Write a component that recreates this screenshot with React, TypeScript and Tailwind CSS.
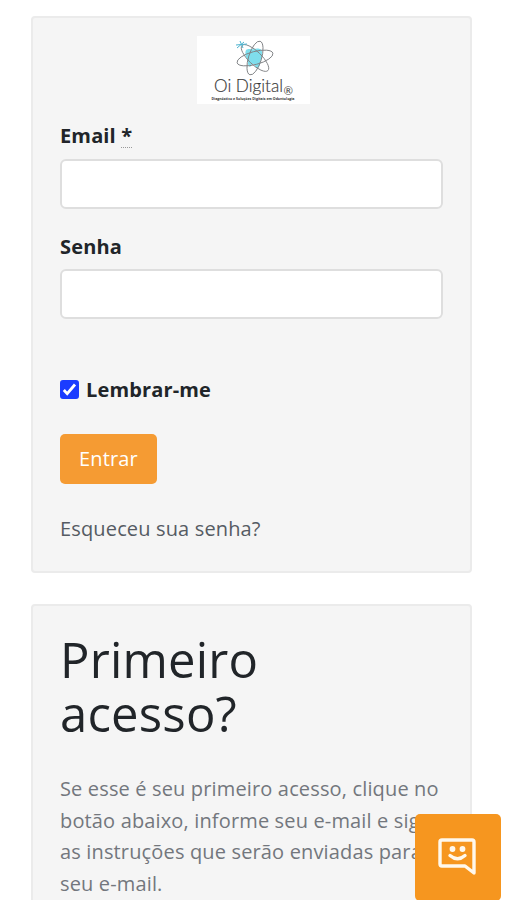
import { useState } from "react";

function Logo() {
    return (
        <svg viewBox="0 0 113 68" className="relative left-[2px] mx-auto block h-[68px] w-[113px] bg-white" role="img" aria-label="Oi Digital">
            <path d="M49 14c3-2 5 0 8-1 3-1 8-1 8 3 1 5-2 8-2 12-1 4-3 6-5 2-1-3-3-3-4 0-1 2-3 0-3-3-1-5-4-8-2-13z" fill="#7fdeec" />
            <g fill="none" stroke="#808285" strokeWidth="0.9">
                <ellipse cx="58" cy="22" rx="18.500" ry="6.500" transform="rotate(-15 58 22)" />
                <ellipse cx="58" cy="22" rx="18" ry="6.500" transform="rotate(44 58 22)" />
                <ellipse cx="58" cy="22" rx="17.500" ry="6.500" transform="rotate(-73 58 22)" />
            </g>
            <path d="M39 9l11-1M43 5l3 7M40 12l7-6" stroke="#4cb3cf" strokeWidth="1" />
            <text x="17" y="55.500" fontSize="18" fontFamily="Lato" fontWeight="300" fill="#333" stroke="#555" strokeWidth="0.2" letterSpacing="0" textLength="69" lengthAdjust="spacingAndGlyphs">Oi Digital</text>
            <text x="86.500" y="58.500" fontSize="12" fontFamily="Lato" letterSpacing="0" fill="#444" textLength="9.500" lengthAdjust="spacingAndGlyphs">®</text>
            <text x="14.500" y="64" fontSize="3.600" fontFamily="Open Sans" fontWeight="700" letterSpacing="0" fill="#333" textLength="83" lengthAdjust="spacingAndGlyphs">Diagnóstico e Soluções Digitais em Odontologia</text>
        </svg>
    )
}

function ChatButton() {
    return (
        <button className="fixed left-[415px] top-[814px] h-[87px] w-[86px] rounded-[5px] bg-[#f6961f]" aria-label="Chat">
            <svg viewBox="0 0 86 87" className="block h-[87px] w-[86px]" fill="none" stroke="#fff8ec" strokeWidth="3.4" strokeLinejoin="round">
                <path d="M27 26h30a2 2 0 0 1 2 2v31l-9-7H27a2 2 0 0 1-2-2V28a2 2 0 0 1 2-2z" />
                <path d="M35 41.500q7.500 6.500 15 0" strokeLinecap="round" />
                <circle cx="37.500" cy="35" r="2.900" fill="#fff8ec" stroke="none" />
                <circle cx="47.500" cy="35" r="2.900" fill="#fff8ec" stroke="none" />
            </svg>
        </button>
    )
}

const inputClass = "block h-[50px] w-full rounded-[6px] border-2 border-[#dedede] bg-white px-4 outline-none";
const cardClass = "rounded-[4px] border-2 border-[#ebebeb] bg-[#f5f5f5] px-[27px]";

export default function App() {
    const [remember, setRemember] = useState(true);

    return (
        <main className="flex h-[900px] flex-col gap-[31px] overflow-hidden bg-white pl-[31px] pr-[34px] pt-4 font-['Open_Sans',sans-serif] text-[20px] leading-[31.500px] tracking-[0.15px] text-[#212529]">
            <form className={`${cardClass} h-[557px] shrink-0 pt-[18px]`} onSubmit={(e) => e.preventDefault()}>
                <Logo />
                <label htmlFor="email" className="mb-[7px] mt-[16px] block font-bold">
                    Email <abbr title="obrigatório" className="underline decoration-[#999] decoration-dotted decoration-1 underline-offset-4">*</abbr>
                </label>
                <input id="email" type="email" className={inputClass} />
                <label htmlFor="senha" className="mb-[7px] mt-[22px] block font-bold">Senha</label>
                <input id="senha" type="password" className={inputClass} />
                <label className="mt-[55px] flex items-center gap-[7px] font-bold">
                    <span className="relative block size-[19px]">
                        <input
                            type="checkbox"
                            checked={remember}
                            onChange={() => setRemember(!remember)}
                            className="block size-[19px] appearance-none rounded-[3px] border-2 border-[#777] bg-white checked:border-[#1b3cff] checked:bg-[#1b3cff]"
                        />
                        {remember && (
                            <svg viewBox="0 0 19 19" className="pointer-events-none absolute inset-0" fill="none" stroke="white" strokeWidth="2.800">
                                <path d="M3.800 10l3.400 3.600L15 4.500" />
                            </svg>
                        )}
                    </span>
                    Lembrar-me
                </label>
                <button className="mt-[28px] block h-[50px] w-[97px] rounded-[5px] bg-[#f59b33] text-white">Entrar</button>
                <a href="#" className="mt-[29px] block text-[#555b63]">Esqueceu sua senha?</a>
            </form>
            <section className={`${cardClass} h-[340px] shrink-0 pt-[26px]`}>
                <h1 className="text-[49px] leading-[54px] tracking-[0.2px]">
                    Primeiro<br />acesso?
                </h1>
                <p className="mt-[33px] whitespace-nowrap text-[#73777d]">
                    Se esse é seu primeiro acesso, clique no<br />
                    botão abaixo, informe seu e-mail e siga<br />
                    as instruções que serão enviadas para<br />
                    seu e-mail.
                </p>
            </section>
            <ChatButton />
        </main>
    )
}
